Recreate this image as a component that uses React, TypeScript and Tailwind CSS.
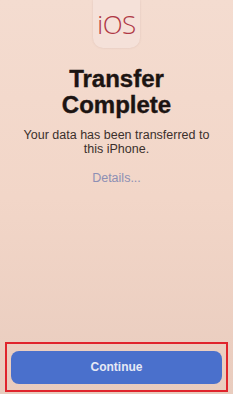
export default function App() {
  return (
    <div
      className="w-[233px] h-[394px] overflow-hidden bg-gradient-to-b from-[#f4dcd0] via-[#f2d6c8] to-[#e9ccbe] flex flex-col items-center"
      style={{ fontFamily: '"Liberation Sans", Arial, sans-serif' }}
    >
      {/* iOS icon */}
      <div className="w-[47px] h-[48px] rounded-b-[10px] bg-[#f5e1d9] shadow-[0_0_2px_rgba(160,120,110,0.25)] flex items-center justify-center">
        <span className="text-[26px] leading-none font-light text-[#b03845] tracking-[-0.5px]" style={{ fontFamily: '"Open Sans", "Liberation Sans", sans-serif' }}>
          iOS
        </span>
      </div>

      <h1 className="mt-[18px] text-center text-[24px] leading-[26px] font-bold text-[#1c1412] [-webkit-text-stroke:0.4px_#1c1412]">
        Transfer
        <br />
        Complete
      </h1>

      <p className="mt-[10px] text-center text-[12.5px] leading-[14px] text-[#3b302c]">
        Your data has been transferred to
        <br />
        this iPhone.
      </p>

      <div className="mt-[15px] text-[12.5px] leading-[14px] text-[#8d8fb4]">Details...</div>

      <div className="flex-1" />

      <div className="mb-[2px] w-[223px] h-[50px] border-[2.5px] border-[#e0242c] flex items-center justify-center">
        <button className="w-[211px] h-[33px] rounded-[8px] bg-[#4a70cc] text-[12px] font-bold text-[#e6e9f5]">
          Continue
        </button>
      </div>
    </div>
  );
}
